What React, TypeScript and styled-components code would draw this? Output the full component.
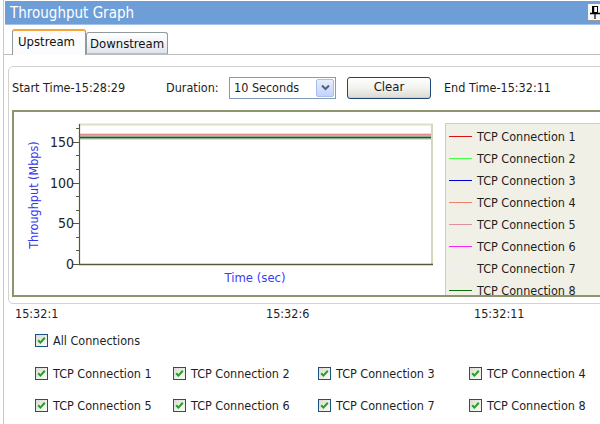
import React from 'react';
import styled, { createGlobalStyle } from 'styled-components';

const GlobalStyle = createGlobalStyle`
  html, body {
    margin: 0;
    padding: 0;
    background: #fff;
  }
  body {
    font-family: "DejaVu Sans Condensed", "DejaVu Sans", sans-serif;
    font-size: 12.5px;
    color: #1e1e1e;
  }
`;

const connections = [
  { name: 'TCP Connection 1', color: '#dd1010' },
  { name: 'TCP Connection 2', color: '#44ff44' },
  { name: 'TCP Connection 3', color: '#0000d8' },
  { name: 'TCP Connection 4', color: '#f08068' },
  { name: 'TCP Connection 5', color: '#e090a0' },
  { name: 'TCP Connection 6', color: '#ff20ff' },
  { name: 'TCP Connection 7', color: '#eeeeee' },
  { name: 'TCP Connection 8', color: '#107010' },
];

// checkbox grid order, as on screen
const checkOrder = [1, 2, 3, 4, 5, 6, 7, 8];

export default function App() {
  return (
    <Page>
      <GlobalStyle />
      <Window>
        <TitleBar>
          <TitleText>Throughput Graph</TitleText>
          <PinButton>
            <svg width="13" height="15" viewBox="0 0 13 15">
              <rect x="3.5" y="1.5" width="5" height="6" fill="#fff" stroke="#000" />
              <line x1="4.5" y1="2" x2="4.5" y2="7" stroke="#000" strokeWidth="1.5" />
              <line x1="1" y1="8.5" x2="11" y2="8.5" stroke="#000" strokeWidth="1.5" />
              <line x1="6" y1="9" x2="6" y2="14" stroke="#000" strokeWidth="1.2" />
            </svg>
          </PinButton>
        </TitleBar>

        <TabStrip>
          <Tab $active>Upstream</Tab>
          <Tab>Downstream</Tab>
        </TabStrip>

        <GroupBox>
          <ControlRow>
            <Label>Start Time-15:28:29</Label>
            <Label>Duration:</Label>
            <Select>
              <SelectText>10 Seconds</SelectText>
              <SelectArrow>
                <svg width="11" height="9" viewBox="0 0 11 9">
                  <path d="M2 2.5 L5.5 6 L9 2.5" fill="none" stroke="#4d6185" strokeWidth="2" />
                </svg>
              </SelectArrow>
            </Select>
            <Button>Clear</Button>
            <Label>End Time-15:32:11</Label>
          </ControlRow>

          <ChartFrame>
            <ThroughputChart />
            <Legend>
              {connections.map((c) => (
                <LegendRow key={c.name}>
                  <Swatch $color={c.color} />
                  <span>{c.name}</span>
                </LegendRow>
              ))}
            </Legend>
          </ChartFrame>
        </GroupBox>

        <TimeRow>
          <span>15:32:1</span>
          <span>15:32:6</span>
          <span>15:32:11</span>
        </TimeRow>

        <CheckArea>
          <CheckItem>
            <CheckBox />
            <span>All Connections</span>
          </CheckItem>
          <CheckGrid>
            {checkOrder.map((n) => (
              <CheckItem key={n}>
                <CheckBox />
                <span>TCP Connection {n}</span>
              </CheckItem>
            ))}
          </CheckGrid>
        </CheckArea>
      </Window>
    </Page>
  );
}

function CheckBox() {
  return (
    <Box>
      <svg width="11" height="11" viewBox="0 0 11 11">
        <path d="M2.2 5.2 L4.4 7.6 L8.8 2.8" fill="none" stroke="#21a121" strokeWidth="2" />
      </svg>
    </Box>
  );
}

function ThroughputChart() {
  const left = 65;
  const right = 418;
  const top = 12;
  const bottom = 152;
  const max = 172;
  const y = (v: number) => bottom - (v * (bottom - top)) / max;

  const ticks: number[] = [];
  for (let i = 0; i <= 10; i++) ticks.push((i * 50) / 3);

  return (
    <svg width="431" height="183" viewBox="0 0 431 183" style={{ flexShrink: 0 }}>
      <text
        x="19"
        y="83"
        transform="rotate(-90 19 83)"
        textAnchor="middle"
        dominantBaseline="central"
        fill="#3535f5"
        fontSize="12.5"
      >
        Throughput (Mbps)
      </text>

      {/* plot frame */}
      <line x1={left} y1={top + 0.5} x2={right + 1} y2={top + 0.5} stroke="#dedec6" strokeWidth="2" />
      <line x1={right} y1={top} x2={right} y2={bottom} stroke="#d6d6be" strokeWidth="2" />

      {/* data */}
      <line x1={left} y1={22} x2={right - 1} y2={22} stroke="#f0b0b0" strokeWidth="1" />
      <line x1={left} y1={23} x2={right - 1} y2={23} stroke="#d04040" strokeWidth="1" />
      <line x1={left} y1={25.5} x2={right - 1} y2={25.5} stroke="#1c5c1c" strokeWidth="2" />
      <line x1={left} y1={27} x2={right - 1} y2={27} stroke="#a0a6a0" strokeWidth="0.8" />

      {/* axes */}
      <line x1={left + 0.5} y1={top} x2={left + 0.5} y2={bottom} stroke="#555a38" strokeWidth="1.2" />
      <line x1={left} y1={bottom + 0.5} x2={right + 1} y2={bottom + 0.5} stroke="#555a38" strokeWidth="1.5" />

      {ticks.map((v, i) => {
        const major = i % 3 === 0;
        const ty = Math.round(y(v)) + 0.5;
        return (
          <line
            key={i}
            x1={major ? 59 : 62}
            y1={ty}
            x2={left}
            y2={ty}
            stroke="#555a38"
            strokeWidth="1"
          />
        );
      })}

      {[0, 50, 100, 150].map((v) => (
        <text
          key={v}
          x="60"
          y={y(v)}
          textAnchor="end"
          dominantBaseline="central"
          fill="#222"
          fontSize="14"
        >
          {v}
        </text>
      ))}

      <text x="241" y="165" textAnchor="middle" dominantBaseline="central" fill="#3c3cf0" fontSize="13">
        Time (sec)
      </text>
    </svg>
  );
}

const Page = styled.div`
  width: 600px;
  height: 424px;
  overflow: hidden;
  background: #fff;
  padding-left: 3px;
  box-sizing: border-box;
`;

const Window = styled.div`
  height: 100%;
  border-left: 1px solid #c9c9c9;
  display: flex;
  flex-direction: column;
`;

const TitleBar = styled.div`
  margin: 1px 0 0 1px;
  height: 23px;
  background: #6d9ed8;
  border-bottom: 1px solid #a4c1e8;
  display: flex;
  align-items: center;
  justify-content: space-between;
  padding-left: 5px;
`;

const TitleText = styled.span`
  color: #fff;
  font-size: 15px;
`;

const PinButton = styled.span`
  width: 14px;
  height: 16px;
  margin-right: -2px;
  background: #f6f6f6;
  border-bottom: 1px solid #9a9a9a;
  display: flex;
  align-items: center;
  justify-content: center;
`;

const TabStrip = styled.div`
  margin-top: 4px;
  height: 25px;
  border-bottom: 1px solid #bcbcbc;
  display: flex;
  align-items: flex-end;
  padding-left: 8px;
`;

const Tab = styled.div<{ $active?: boolean }>`
  box-sizing: border-box;
  height: ${(p) => (p.$active ? '26px' : '22px')};
  width: ${(p) => (p.$active ? '74px' : '82px')};
  margin-bottom: ${(p) => (p.$active ? '-1px' : '0')};
  padding-left: ${(p) => (p.$active ? '5px' : '3px')};
  padding-bottom: ${(p) => (p.$active ? '3px' : '0')};
  padding-top: ${(p) => (p.$active ? '0' : '1px')};
  display: flex;
  align-items: center;
  font-size: 13px;
  color: #111;
  border: 1px solid #919b9c;
  border-bottom: ${(p) => (p.$active ? 'none' : '1px solid #bcbcbc')};
  border-top: ${(p) => (p.$active ? '2px solid #f2a53a' : '1px solid #919b9c')};
  border-radius: 3px 3px 0 0;
  background: ${(p) =>
    p.$active ? '#fcfcfe' : 'linear-gradient(#ffffff, #eef1f5 60%, #dde3ec)'};
`;

const GroupBox = styled.div`
  margin: 11px -20px 0 4px;
  height: 238px;
  box-sizing: border-box;
  border: 1px solid #d2d2d2;
  border-radius: 5px;
  padding: 9px 0 0 3px;
`;

const ControlRow = styled.div`
  display: grid;
  grid-template-columns: 154px 63px 118px 97px auto;
  align-items: center;
  height: 23px;
`;

const Label = styled.span`
  white-space: nowrap;
`;

const Select = styled.div`
  width: 107px;
  height: 22px;
  box-sizing: border-box;
  border: 1px solid #7f9db9;
  background: #fff;
  display: flex;
  align-items: center;
`;

const SelectText = styled.span`
  padding-left: 4px;
  flex: 1;
  white-space: nowrap;
`;

const SelectArrow = styled.span`
  width: 18px;
  height: 18px;
  margin-right: 1px;
  box-sizing: border-box;
  border: 1px solid #aabde8;
  border-radius: 2px;
  background: linear-gradient(#e8effd, #c2d3fb);
  display: flex;
  align-items: center;
  justify-content: center;
`;

const Button = styled.div`
  width: 84px;
  height: 22px;
  box-sizing: border-box;
  border: 1px solid #1e4678;
  border-radius: 3px;
  background: linear-gradient(#ffffff, #f2f2ee 50%, #dcdad0);
  box-shadow: inset 0 -1px 0 #c6cfe2;
  display: flex;
  align-items: center;
  justify-content: center;
  padding-bottom: 2px;
  font-size: 13px;
  color: #1a1a1a;
`;

const ChartFrame = styled.div`
  margin-top: 11px;
  height: 187px;
  box-sizing: border-box;
  border: 2px solid #8d9570;
  background: #fff;
  display: flex;
  overflow: hidden;
`;

const Legend = styled.div`
  margin-top: 11px;
  width: 180px;
  flex-shrink: 0;
  height: 200px;
  box-sizing: border-box;
  border: 1px solid #cfcfb8;
  background: #f1f0e6;
  padding: 1px 0 0 3px;
`;

const LegendRow = styled.div`
  height: 22px;
  display: flex;
  align-items: center;
  gap: 5px;
  font-size: 12.5px;
  white-space: nowrap;
`;

const Swatch = styled.span<{ $color: string }>`
  width: 23px;
  height: 1px;
  background: ${(p) => p.$color};
`;

const TimeRow = styled.div`
  height: 18px;
  display: grid;
  grid-template-columns: 251px 208px auto;
  align-items: center;
  padding-left: 11px;
`;

const CheckArea = styled.div`
  padding-left: 31px;
  margin-top: 8px;
  display: flex;
  flex-direction: column;
`;

const CheckGrid = styled.div`
  margin-top: 13px;
  display: grid;
  grid-template-columns: 138px 145px 151px auto;
  grid-auto-rows: 20px;
  row-gap: 12px;
`;

const CheckItem = styled.label`
  height: 20px;
  display: flex;
  align-items: center;
  gap: 5px;
  white-space: nowrap;
`;

const Box = styled.span`
  width: 13px;
  height: 13px;
  box-sizing: border-box;
  border: 1px solid #1c5180;
  background: linear-gradient(135deg, #dcdcd6, #fbfbf8);
  display: inline-flex;
  align-items: center;
  justify-content: center;
  flex-shrink: 0;
`;
